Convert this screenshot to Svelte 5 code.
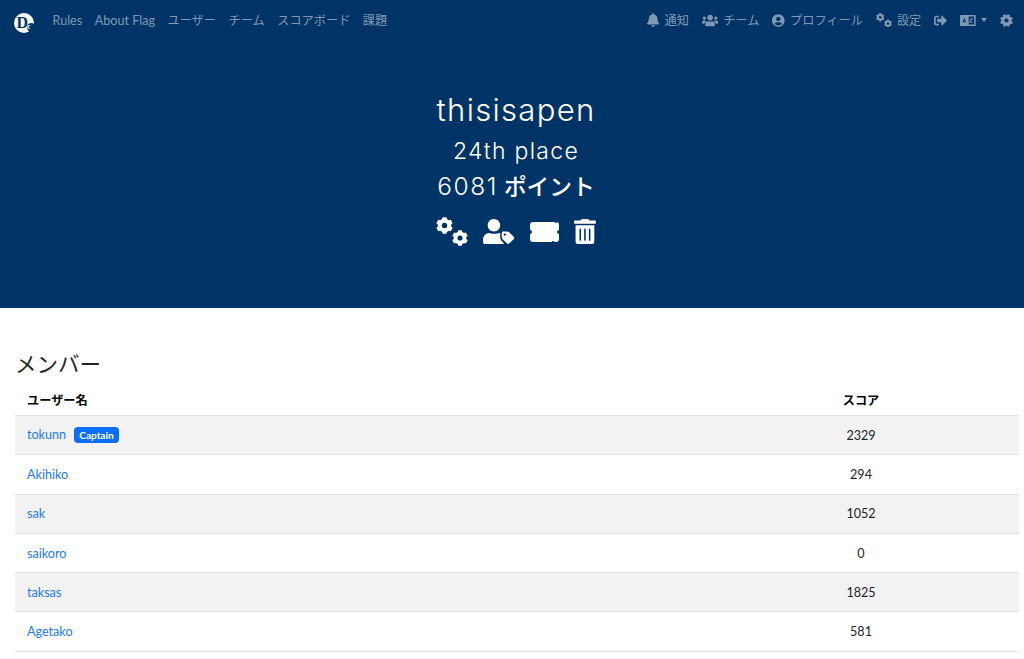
<script>
  const gear = (cx, cy, r, teeth = 8) => {
    // toothed ring, the hole is cut by evenodd
    const pts = [];
    const step = (Math.PI * 2) / teeth;
    const p = (rad, ang) => `${(cx + rad * Math.cos(ang)).toFixed(1)} ${(cy + rad * Math.sin(ang)).toFixed(1)}`;
    for (let i = 0; i < teeth; i++) {
      const a = i * step + step / 2;
      pts.push(p(r * 0.8, a - step * 0.34), p(r, a - step * 0.22), p(r, a + step * 0.22), p(r * 0.8, a + step * 0.34));
    }
    const h = r * 0.32;
    return `M${pts.join("L")}Z M${cx - h} ${cy}a${h} ${h} 0 1 0 ${h * 2} 0a${h} ${h} 0 1 0 ${-h * 2} 0Z`;
  };

  const cogs = gear(8.5, 8.5, 8.5, 6) + gear(24, 21, 8, 6);
  const cog = gear(12, 12, 12);

  const members = [
    {name: "tokunn", score: 2329, captain: true},
    {name: "Akihiko", score: 294},
    {name: "sak", score: 1052},
    {name: "saikoro", score: 0},
    {name: "taksas", score: 1825},
    {name: "Agetako", score: 581},
  ];
</script>

<nav>
  <div class="nav-group">
    <svg class="logo" viewBox="0 0 20 20">
      <circle cx="10" cy="10" r="10" fill="#fff" />
      <circle cx="17.500" cy="14.500" r="4.500" fill="#003366" />
      <text x="2.500" y="15" class="logo-d">D</text>
      <text x="13" y="16" class="logo-c">c</text>
    </svg>
    <a href="#rules">Rules</a>
    <a href="#flag">About Flag</a>
    <a href="#users" class="ja">ユーザー</a>
    <a href="#teams" class="ja">チーム</a>
    <a href="#board" class="ja">スコアボード</a>
    <a href="#tasks" class="ja">課題</a>
  </div>
  <div class="nav-group right">
    <a href="#n" class="ja">
      <svg class="ic bell" viewBox="0 0 448 512"><path d="M224 512c35.32 0 63.97-28.65 63.97-64H160.03c0 35.35 28.65 64 63.97 64zm215.39-149.71c-19.32-20.76-55.47-51.99-55.47-154.29 0-77.7-54.48-139.9-127.94-155.16V32c0-17.67-14.32-32-31.98-32s-31.98 14.33-31.98 32v20.84C118.56 68.1 64.08 130.3 64.08 208c0 102.3-36.15 133.53-55.47 154.29-6 6.45-8.66 14.16-8.61 21.71.11 16.4 12.98 32 32.1 32h383.8c19.12 0 32-15.6 32.1-32 .05-7.55-2.61-15.27-8.61-21.71z" /></svg>
      通知
    </a>
    <a href="#t" class="ja">
      <svg class="ic" viewBox="0 0 640 512"><path d="M96 224c35.3 0 64-28.7 64-64s-28.7-64-64-64-64 28.7-64 64 28.7 64 64 64zm448 0c35.3 0 64-28.7 64-64s-28.7-64-64-64-64 28.7-64 64 28.7 64 64 64zm32 32h-64c-17.6 0-33.5 7.1-45.1 18.6 40.3 22.1 68.9 62 75.1 109.4h66c17.7 0 32-14.3 32-32v-32c0-35.3-28.7-64-64-64zm-256 0c61.9 0 112-50.1 112-112S381.9 32 320 32 208 82.1 208 144s50.1 112 112 112zm76.8 32h-8.3c-20.8 10-43.9 16-68.5 16s-47.6-6-68.5-16h-8.3C179.6 288 128 339.6 128 403.2V432c0 26.5 21.5 48 48 48h288c26.5 0 48-21.5 48-48v-28.8c0-63.6-51.6-115.2-115.2-115.2zm-223.7-13.4C161.5 263.1 145.6 256 128 256H64c-35.3 0-64 28.7-64 64v32c0 17.7 14.3 32 32 32h65.9c6.3-47.4 34.9-87.3 75.2-109.4z" /></svg>
      チーム
    </a>
    <a href="#p" class="ja">
      <svg class="ic" viewBox="0 0 496 512"><path d="M248 8C111 8 0 119 0 256s111 248 248 248 248-111 248-248S385 8 248 8zm0 96c48.6 0 88 39.4 88 88s-39.4 88-88 88-88-39.4-88-88 39.4-88 88-88zm0 344c-58.7 0-111.3-26.6-146.5-68.2 18.8-35.4 55.6-59.8 98.5-59.8 2.4 0 4.8.4 7.1 1.1 13 4.2 26.6 6.9 40.9 6.9 14.3 0 28-2.7 40.9-6.9 2.3-.7 4.7-1.1 7.1-1.1 42.9 0 79.7 24.4 98.5 59.8C359.3 421.4 306.7 448 248 448z" /></svg>
      プロフィール
    </a>
    <a href="#s" class="ja">
      <svg class="ic navcogs" viewBox="0 0 32 29"><path fill-rule="evenodd" d={cogs} /></svg>
      設定
    </a>
    <a href="#o" aria-label="logout">
      <svg class="ic" viewBox="0 0 512 512"><path d="M497 273L329 441c-15 15-41 4.5-41-17v-96H152c-13.3 0-24-10.7-24-24v-96c0-13.3 10.7-24 24-24h136V88c0-21.4 25.9-32 41-17l168 168c9.3 9.4 9.3 24.6 0 34zM192 436v-40c0-6.6-5.4-12-12-12H96c-17.7 0-32-14.3-32-32V160c0-17.7 14.3-32 32-32h84c6.6 0 12-5.4 12-12V76c0-6.6-5.4-12-12-12H96c-53 0-96 43-96 96v192c0 53 43 96 96 96h84c6.6 0 12-5.4 12-12z" /></svg>
    </a>
    <a href="#l" class="lang" aria-label="language">
      <svg class="ic flag" viewBox="0 0 20 14"><path fill-rule="evenodd" d="M1 0h18a1 1 0 0 1 1 1v12a1 1 0 0 1-1 1H1a1 1 0 0 1-1-1V1a1 1 0 0 1 1-1zM11 2v10h7V2zM5 4 3 10h1.200l.4-1.200h2.200l.4 1.200H8L6 4zM5 7.700l.700-2 .700 2zM12.500 4.500h4.500v1h-1.500c-.2 1.200-.7 2.200-1.400 3 .5.300 1 .5 1.600.7l-.4 1c-.7-.2-1.300-.6-1.900-1-.5.400-1.100.7-1.800 1l-.4-1c.6-.2 1.100-.4 1.500-.7-.5-.6-.8-1.200-1-1.900h1c.2.500.4.900.7 1.200.5-.6.800-1.300 1-2.300h-3.400z" /></svg>
      <span class="caret"></span>
    </a>
    <a href="#c" aria-label="theme">
      <svg class="ic" viewBox="0 0 24 24"><path fill-rule="evenodd" d={cog} /></svg>
    </a>
  </div>
</nav>

<header>
  <h1>thisisapen</h1>
  <h2>24th place</h2>
  <h2 class="points"><span class="num">6081</span> ポイント</h2>
  <div class="actions">
    <svg class="cogs" viewBox="0 0 32 29"><path fill-rule="evenodd" d={cogs} /></svg>
    <svg class="big" viewBox="0 0 640 512"><path d="M224 256c70.700 0 128-57.300 128-128S294.700 0 224 0 96 57.300 96 128s57.300 128 128 128zM352 288h-16.700c-22.200 10.200-46.900 16-71.300 16h-80c-1 0-1 0-1 0-14 0-30-5-45-16h-3.200C60.200 288 0 348.200 0 422.400V464c0 26.500 21.500 48 48 48h352c12 0 23-4.500 31.400-11.800l-39-39C374 443 352 411 352 367.200z" /><path d="M630.600 364.900l-90.300-90.200c-12-12-28.300-18.700-45.300-18.700h-79.300c-17.700 0-32 14.300-32 32v79.200c0 17 6.700 33.200 18.700 45.200l90.300 90.200c12.500 12.500 32.800 12.500 45.300 0l92.500-92.500c12.600-12.500 12.600-32.700.1-45.200zm-182.800-21c-13.300 0-24-10.700-24-24s10.700-24 24-24 24 10.700 24 24c0 13.200-10.700 24-24 24z" /></svg>
    <svg class="ticket" viewBox="0 0 29 20"><path d="M3 0h21.500a1.700 1.700 0 0 0 3 0H26a3 3 0 0 1 3 3v5a2 2 0 0 0 0 4v5a3 3 0 0 1-3 3h-1.500a1.700 1.700 0 0 0-3 0H3a3 3 0 0 1-3-3v-5a2 2 0 0 0 0-4V3a3 3 0 0 1 3-3z" /></svg>
    <svg class="big" viewBox="0 0 448 512"><path d="M32 464a48 48 0 0 0 48 48h288a48 48 0 0 0 48-48V128H32zm272-256a16 16 0 0 1 32 0v224a16 16 0 0 1-32 0zm-96 0a16 16 0 0 1 32 0v224a16 16 0 0 1-32 0zm-96 0a16 16 0 0 1 32 0v224a16 16 0 0 1-32 0zM432 32H312l-9.400-18.700A24 24 0 0 0 281.100 0H166.800a23.720 23.720 0 0 0-21.400 13.300L136 32H16A16 16 0 0 0 0 48v32a16 16 0 0 0 16 16h416a16 16 0 0 0 16-16V48a16 16 0 0 0-16-16z" /></svg>
  </div>
</header>

<main>
  <h3>メンバー</h3>
  <table>
    <thead>
      <tr><th>ユーザー名</th><th class="score">スコア</th></tr>
    </thead>
    <tbody>
      {#each members as m}
        <tr>
          <td>
            <a href="#u">{m.name}</a>
            {#if m.captain}<span class="badge">Captain</span>{/if}
          </td>
          <td class="score">{m.score}</td>
        </tr>
      {/each}
    </tbody>
  </table>
</main>

<style>
  :global(body) {
    font-family: Lato, "Noto Sans CJK JP", sans-serif;
    font-size: 12.600px;
    color: #212529;
    overflow: hidden;
  }

  nav {
    display: flex;
    justify-content: space-between;
    align-items: center;
    height: 40px;
    padding: 0 11px 0 14px;
    background: #003366;
  }

  .nav-group {
    display: flex;
    align-items: center;
    gap: 12.500px;
  }

  .nav-group.right {
    gap: 13px;
  }

  nav a {
    display: flex;
    align-items: center;
    gap: 5px;
    color: rgba(255, 255, 255, 0.5);
    text-decoration: none;
    white-space: nowrap;
  }

  nav a.ja {
    font-size: 12.200px;
  }

  .logo {
    width: 20px;
    height: 20px;
    margin: 6px 6px 0 0;
  }

  .logo-d {
    font: bold 16px "Liberation Serif", serif;
    fill: #003366;
  }

  .logo-c {
    font: bold 8px "Liberation Serif", serif;
    fill: #fff;
  }

  .ic {
    height: 13px;
    width: auto;
    fill: currentColor;
  }

  .bell {
    height: 14px;
  }

  .navcogs {
    height: 14.500px;
  }

  .flag {
    height: 11px;
  }

  .caret {
    width: 0;
    height: 0;
    border-top: 4px solid currentColor;
    border-left: 3.500px solid transparent;
    border-right: 3.500px solid transparent;
  }

  header {
    height: 268px;
    box-sizing: border-box;
    padding: 50px 0 0 8px;
    background: #003366;
    color: #fff;
    text-align: center;
  }

  h1 {
    margin: 0;
    font-family: Inter, "Noto Sans CJK JP", sans-serif;
    font-size: 31px;
    font-weight: 300;
    line-height: 40px;
    letter-spacing: 1.300px;
  }

  h2 {
    margin: 6px 0 0;
    font-family: Inter, "Noto Sans CJK JP", sans-serif;
    font-size: 23px;
    font-weight: 300;
    line-height: 30px;
    letter-spacing: 1.300px;
  }

  h2.points {
    margin-top: 5px;
    font-size: 22.700px;
    font-weight: 500;
    letter-spacing: 0;
  }

  .num {
    font-size: 24.500px;
    font-weight: 300;
    letter-spacing: 1.500px;
  }

  .actions {
    display: flex;
    justify-content: center;
    align-items: center;
    gap: 15px;
    margin-top: 15px;
  }

  .big {
    height: 25px;
    fill: #fff;
  }

  .cogs {
    height: 29px;
    fill: #fff;
  }

  .ticket {
    height: 20px;
    fill: #fff;
  }

  main {
    padding: 42px 5px 0 15px;
  }

  h3 {
    margin: 0 0 6px;
    font-size: 21.500px;
    font-weight: 400;
    line-height: 28px;
  }

  table {
    width: 100%;
    border-collapse: collapse;
    color: #212529;
  }

  th,
  td {
    padding: 0 12px;
    text-align: left;
    height: 38.300px;
    border-bottom: 1px solid #dee2e6;
  }

  th {
    height: 31px;
    color: #000;
    font-size: 12.200px;
    font-weight: 700;
  }

  td a {
    color: #2279fd;
    text-decoration: none;
  }

  tbody tr:nth-child(odd) {
    background: #f2f2f2;
  }

  .score {
    text-align: center;
    width: 292px;
  }

  .badge {
    display: inline-block;
    margin-left: 5px;
    padding: 3px 5px;
    border-radius: 4px;
    background: #0d6efd;
    color: #fff;
    font-size: 10px;
    font-weight: 700;
    line-height: 10px;
  }
</style>
